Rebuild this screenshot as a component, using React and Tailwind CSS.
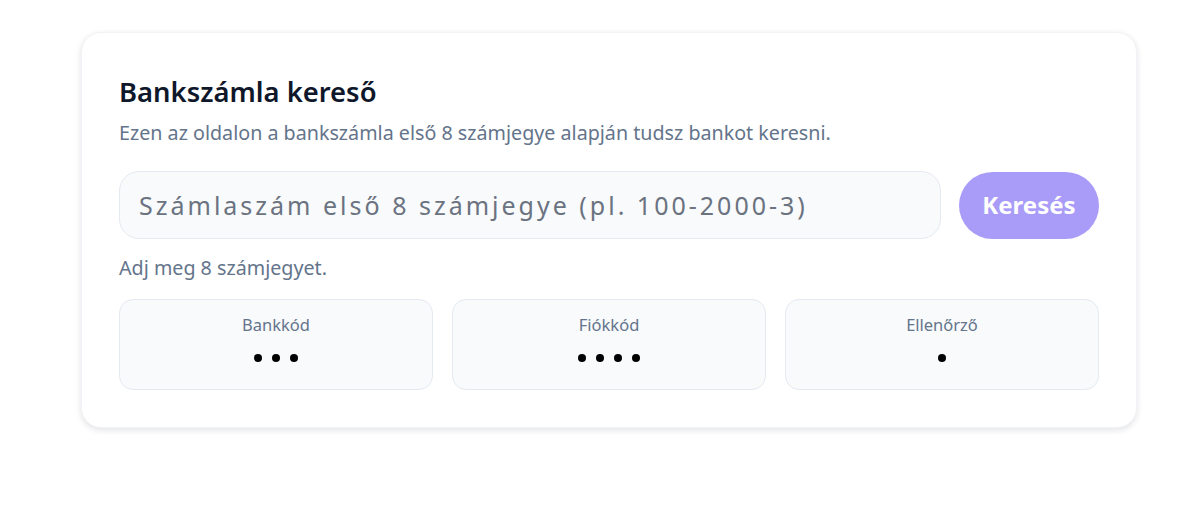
import React from "react";

const Segment = ({ label, count }) => (
  <div className="flex flex-col items-center rounded-[14px] border border-[#e5e9f0] bg-[#f8fafc] pt-[14px] pb-[27px]">
    <span className="text-[16.5px] leading-[22px] text-[#64748b]">{label}</span>
    <span className="mt-[18px] flex gap-[10px]">
      {Array.from({ length: count }).map((_, i) => (
        <span key={i} className="block h-[8px] w-[8px] rounded-full bg-black" />
      ))}
    </span>
  </div>
);

export default function App() {
  const [value, setValue] = React.useState("");

  return (
    <div className="min-h-screen w-full bg-white pl-[81px] pt-[32px] font-['Segoe_UI','Noto_Sans',sans-serif]">
      <div className="w-[1056px] rounded-[20px] border border-[#f1f3f6] bg-white px-[37px] pt-[42px] pb-[37px] shadow-[0_2px_6px_rgba(15,23,42,0.12)]">
        <h1 className="text-[27.4px] font-semibold leading-[34px] text-[#0f172a]">Bankszámla kereső</h1>
        <p className="mt-[10px] text-[19.7px] leading-[28px] text-[#64748b]">
          Ezen az oldalon a bankszámla első 8 számjegye alapján tudsz bankot keresni.
        </p>
        <div className="mt-[24px] flex items-center gap-[18px]">
          <input
            type="text"
            value={value}
            onChange={(e) => setValue(e.target.value)}
            placeholder="Számlaszám első 8 számjegye (pl. 100-2000-3)"
            className="h-[68px] flex-1 rounded-[20px] border border-[#e5e9f0] bg-[#f8fafc] px-[19px] text-[25px] tracking-[0.12em] text-[#111827] placeholder:text-[#6b7280] focus:outline-none"
          />
          <button className="h-[67px] w-[140px] rounded-full bg-[#a99bf8] text-[24px] font-bold text-white">
            Keresés
          </button>
        </div>
        <p className="mt-[15px] text-[19.7px] leading-[28px] text-[#64748b]">Adj meg 8 számjegyet.</p>
        <div className="mt-[17px] grid grid-cols-3 gap-[19px]">
          <Segment label="Bankkód" count={3} />
          <Segment label="Fiókkód" count={4} />
          <Segment label="Ellenőrző" count={1} />
        </div>
      </div>
    </div>
  );
}
